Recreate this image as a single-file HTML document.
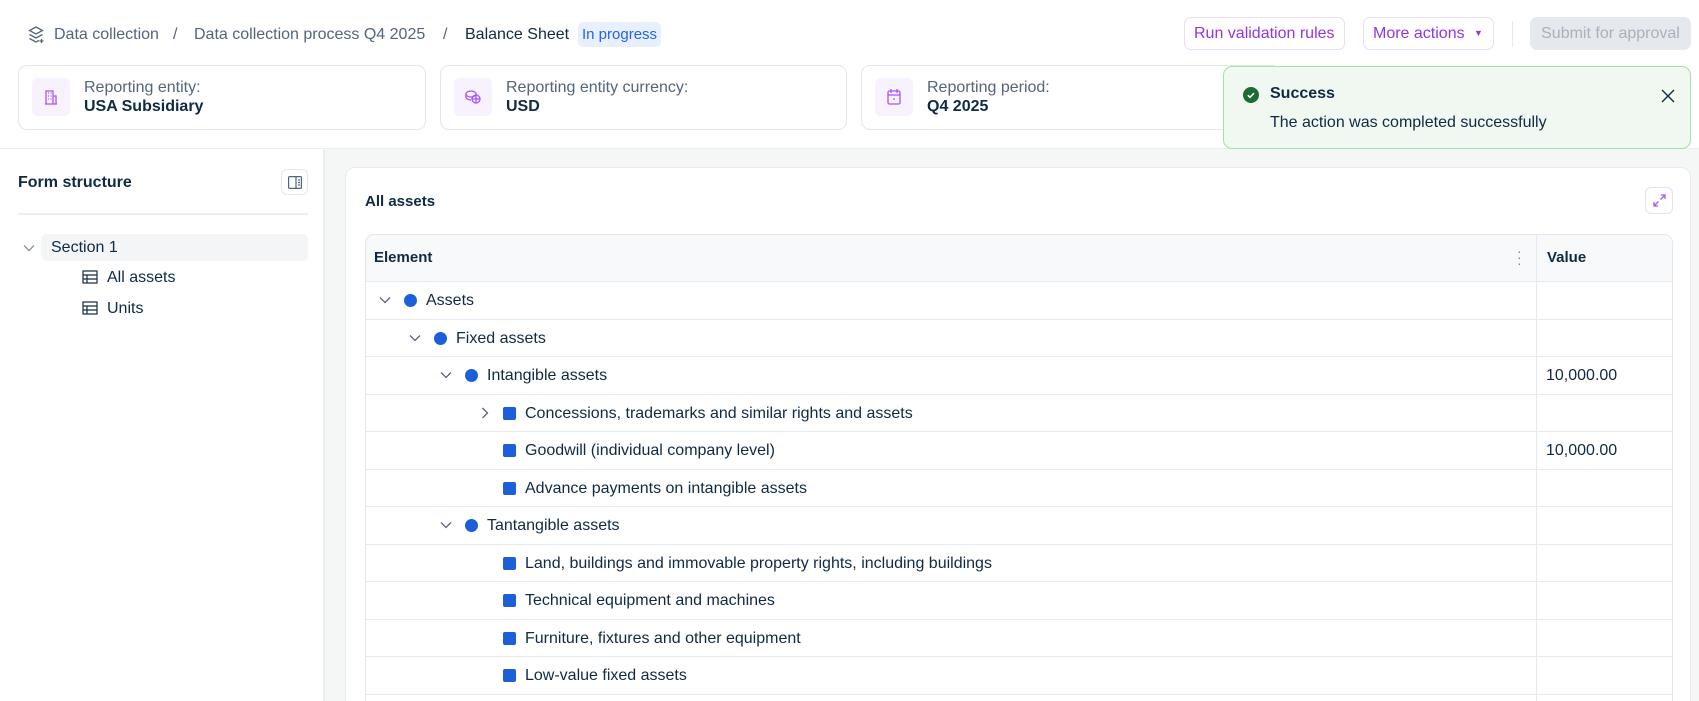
<!DOCTYPE html>
<html style="height:701px;overflow:hidden"><head><meta charset="utf-8"><style>
*{box-sizing:border-box;margin:0;padding:0}
body{width:1699px;height:701px;overflow:hidden;background:#fff;font-family:"Liberation Sans",sans-serif;color:#102a43;position:relative}
.abs{position:absolute}
.gray{color:#53657a}
.btn{position:absolute;top:17px;height:33px;border:1px solid #eadcfb;border-radius:7px;color:#9333ea;font-size:16px;line-height:31px;padding:0 9px;background:#fff}
.card{position:absolute;top:65px;height:65px;border:1px solid #e3e6ea;border-radius:9px;background:#fff}
.ib{position:absolute;left:13px;top:12px;width:38px;height:38px;border-radius:6px;background:#f7f2fe}
.lab{position:absolute;left:65px;top:13px;font-size:16px;color:#53657a}
.val{position:absolute;left:65px;top:32px;font-size:16px;font-weight:bold;color:#102a43}
.row{position:absolute;left:0;width:1307px;height:37.5px;border-top:1px solid #e6e9ed;font-size:16px}
.row .t{position:absolute;top:10px}
.row .v{position:absolute;left:1180px;top:10px}
.dot{position:absolute;top:12px;width:13px;height:13px;border-radius:50%;background:#1d5fd9}
.sq{position:absolute;top:12px;width:13px;height:13px;border-radius:2px;background:#1d5fd9}
.chev{position:absolute;top:9px}
</style></head><body>
<svg class="abs" style="left:28px;top:26px" width="16" height="18" viewBox="0 0 16 18" fill="none" stroke="#53657a" stroke-width="1.3"><path d="M8 1L14.5 4.5 8 8 1.5 4.5z"/><path d="M1.5 8.5L8 12l6.5-3.5"/><path d="M1.5 12.5L8 16l3-1.6"/><path d="M13.5 13v4M11.5 15h4"/></svg>
<div class="abs gray" style="left:54px;top:26px;font-size:16px">Data collection</div>
<div class="abs gray" style="left:173px;top:26px;font-size:16px">/</div>
<div class="abs gray" style="left:194px;top:26px;font-size:16px">Data collection process Q4 2025</div>
<div class="abs gray" style="left:443px;top:26px;font-size:16px">/</div>
<div class="abs" style="left:465px;top:26px;font-size:16px">Balance Sheet</div>
<div class="abs" style="left:578px;top:22px;height:25px;padding:0 4px;border-radius:5px;background:#e8f0fd;color:#2563eb;font-size:15px;line-height:25px">In progress</div>
<div class="btn" style="left:1184px;width:161px">Run validation rules</div>
<div class="btn" style="left:1363px;width:131px">More actions <span style="font-size:9px;vertical-align:2px;margin-left:5px">▼</span></div>
<div class="abs" style="left:1512px;top:21px;width:1px;height:26px;background:#e6e9ed"></div>
<div class="abs" style="left:1530px;top:17px;width:161px;height:33px;border-radius:7px;background:#e5e8ec;color:#a9b1bb;font-size:16px;line-height:33px;text-align:center">Submit for approval</div>
<div class="card" style="left:18px;width:408px"><div class="ib"><svg style="position:absolute;left:11px;top:11px" width="16" height="16" viewBox="0 0 16 16" fill="none" stroke="#a855f7" stroke-width="1.3"><path d="M2 15h12M3 15V2h7v13M10 7h3v8M5 4h1M7.5 4h1M5 7h1M7.5 7h1M5 10h1M7.5 10h1"/></svg></div><div class="lab">Reporting entity:</div><div class="val">USA Subsidiary</div></div>
<div class="card" style="left:440px;width:407px"><div class="ib"><svg style="position:absolute;left:10px;top:11px" width="18" height="16" viewBox="0 0 18 16" fill="none" stroke="#a855f7" stroke-width="1.3"><ellipse cx="7" cy="5" rx="5" ry="3"/><path d="M2 5v3c0 1.6 2.2 3 5 3"/><circle cx="12" cy="10" r="4"/><path d="M8 10h8M12 6v8"/></svg></div><div class="lab">Reporting entity currency:</div><div class="val">USD</div></div>
<div class="card" style="left:861px;width:420px"><div class="ib"><svg style="position:absolute;left:11px;top:10px" width="16" height="17" viewBox="0 0 16 17" fill="none" stroke="#a855f7" stroke-width="1.3"><rect x="2" y="3" width="12" height="13" rx="1.5"/><path d="M2 7h12M5 1v4M11 1v4M7 11h2"/></svg></div><div class="lab">Reporting period:</div><div class="val">Q4 2025</div></div>
<div class="abs" style="left:1223px;top:66px;width:468px;height:83px;background:#f1f8f1;border:1px solid #a8dfa8;border-radius:9px;z-index:5">
<svg style="position:absolute;left:19px;top:20px" width="16" height="16" viewBox="0 0 16 16"><circle cx="8" cy="8" r="8" fill="#1d6b34"/><path d="M4.8 8.2l2.2 2.1 4-4.2" stroke="#fff" stroke-width="1.5" fill="none"/></svg>
<div style="position:absolute;left:46px;top:18px;font-size:16px;font-weight:bold;color:#102a43">Success</div>
<div style="position:absolute;left:46px;top:47px;font-size:16px;color:#102a43">The action was completed successfully</div>
<svg style="position:absolute;left:437px;top:22px" width="14" height="14" viewBox="0 0 14 14" stroke="#102a43" stroke-width="1.4"><path d="M1 1l12 12M13 1L1 13"/></svg>
</div>
<div class="abs" style="left:0;top:148px;width:1699px;height:553px;background:#f5f6f6;border-top:1px solid #eceef0"></div>
<div class="abs" style="left:0;top:149px;width:325px;height:552px;background:#fff;border-right:2px solid #eceef0"></div>
<div class="abs" style="left:18px;top:174px;font-size:16px;font-weight:bold">Form structure</div>
<div class="abs" style="left:281px;top:169px;width:27px;height:26px;border:1px solid #e3e6ea;border-radius:6px"><svg style="position:absolute;left:6px;top:6px" width="14" height="13" viewBox="0 0 14 13" fill="none" stroke="#53657a" stroke-width="1.2"><rect x="0.6" y="0.6" width="12.8" height="11.8" rx="1"/><path d="M8 1v11M10 4h2M10 6.5h2M10 9h2"/></svg></div>
<div class="abs" style="left:18px;top:213px;width:290px;height:2px;background:#eceef0"></div>
<svg class="abs" style="left:23px;top:244px" width="12" height="8" viewBox="0 0 12 8" fill="none" stroke="#7a8797" stroke-width="1.2"><path d="M1 1.5l5 5 5-5"/></svg>
<div class="abs" style="left:41px;top:234px;width:267px;height:27px;background:#f4f5f7;border-radius:6px"></div>
<div class="abs" style="left:51px;top:239px;font-size:16px">Section 1</div>
<svg class="abs" style="left:82px;top:270px" width="16" height="14" viewBox="0 0 16 14" fill="none" stroke="#102a43" stroke-width="1.2"><rect x="1" y="1" width="14" height="12"/><path d="M1 5h14M1 9h14M5 5v8"/></svg>
<div class="abs" style="left:107px;top:269px;font-size:16px">All assets</div>
<svg class="abs" style="left:82px;top:301px" width="16" height="14" viewBox="0 0 16 14" fill="none" stroke="#102a43" stroke-width="1.2"><rect x="1" y="1" width="14" height="12"/><path d="M1 5h14M1 9h14M5 5v8"/></svg>
<div class="abs" style="left:107px;top:300px;font-size:16px">Units</div>
<div class="abs" style="left:345px;top:167px;width:1346px;height:560px;background:#fff;border:1px solid #e8eaed;border-radius:10px">
<div style="position:absolute;left:19px;top:25px;font-size:15px;font-weight:bold">All assets</div>
<div style="position:absolute;left:1299px;top:19px;width:28px;height:27px;border:1px solid #eadcfb;border-radius:6px"><svg style="position:absolute;left:7px;top:6px" width="13" height="13" viewBox="0 0 13 13" fill="none" stroke="#a855f7" stroke-width="1.3"><path d="M7.5 5.5L12 1M8 1h4v4M5.5 7.5L1 12M1 8v4h4"/></svg></div>
<div style="position:absolute;left:19px;top:66px;width:1308px;height:500px;border:1px solid #e3e6ea;border-radius:9px;overflow:hidden">
<div style="position:absolute;left:0;top:0;width:1308px;height:46px;background:#f8f9fa"></div>
<div style="position:absolute;left:8px;top:14px;font-size:15px;font-weight:bold">Element</div>
<div style="position:absolute;left:1151px;top:13px;color:#7a8797;font-size:14px;line-height:6px">·<br>·<br>·</div>
<div style="position:absolute;left:1181px;top:14px;font-size:15px;font-weight:bold">Value</div>
<div style="position:absolute;left:1170px;top:0;width:1px;height:500px;background:#e6e9ed;z-index:2"></div>
<div class="row" style="top:46px"><svg class="chev" style="left:13px;top:14px" width="12" height="8" viewBox="0 0 12 8" fill="none" stroke="#53657a" stroke-width="1.3"><path d="M1 1.5l5 5 5-5"/></svg><div class="dot" style="left:38px"></div><div class="t" style="left:60px">Assets</div></div>
<div class="row" style="top:83.5px"><svg class="chev" style="left:43px;top:14px" width="12" height="8" viewBox="0 0 12 8" fill="none" stroke="#53657a" stroke-width="1.3"><path d="M1 1.5l5 5 5-5"/></svg><div class="dot" style="left:68px"></div><div class="t" style="left:90px">Fixed assets</div></div>
<div class="row" style="top:121px"><svg class="chev" style="left:74px;top:14px" width="12" height="8" viewBox="0 0 12 8" fill="none" stroke="#53657a" stroke-width="1.3"><path d="M1 1.5l5 5 5-5"/></svg><div class="dot" style="left:99px"></div><div class="t" style="left:121px">Intangible assets</div><div class="v">10,000.00</div></div>
<div class="row" style="top:158.5px"><svg class="chev" style="left:115px;top:12px" width="8" height="12" viewBox="0 0 8 12" fill="none" stroke="#53657a" stroke-width="1.3"><path d="M1.5 1l5 5-5 5"/></svg><div class="sq" style="left:137px"></div><div class="t" style="left:159px">Concessions, trademarks and similar rights and assets</div></div>
<div class="row" style="top:196px"><div class="sq" style="left:137px"></div><div class="t" style="left:159px">Goodwill (individual company level)</div><div class="v">10,000.00</div></div>
<div class="row" style="top:233.5px"><div class="sq" style="left:137px"></div><div class="t" style="left:159px">Advance payments on intangible assets</div></div>
<div class="row" style="top:271px"><svg class="chev" style="left:74px;top:14px" width="12" height="8" viewBox="0 0 12 8" fill="none" stroke="#53657a" stroke-width="1.3"><path d="M1 1.5l5 5 5-5"/></svg><div class="dot" style="left:99px"></div><div class="t" style="left:121px">Tantangible assets</div></div>
<div class="row" style="top:308.5px"><div class="sq" style="left:137px"></div><div class="t" style="left:159px">Land, buildings and immovable property rights, including buildings</div></div>
<div class="row" style="top:346px"><div class="sq" style="left:137px"></div><div class="t" style="left:159px">Technical equipment and machines</div></div>
<div class="row" style="top:383.5px"><div class="sq" style="left:137px"></div><div class="t" style="left:159px">Furniture, fixtures and other equipment</div></div>
<div class="row" style="top:421px"><div class="sq" style="left:137px"></div><div class="t" style="left:159px">Low-value fixed assets</div></div>
<div class="row" style="top:458.5px"></div>
</div></div>
</body></html>
